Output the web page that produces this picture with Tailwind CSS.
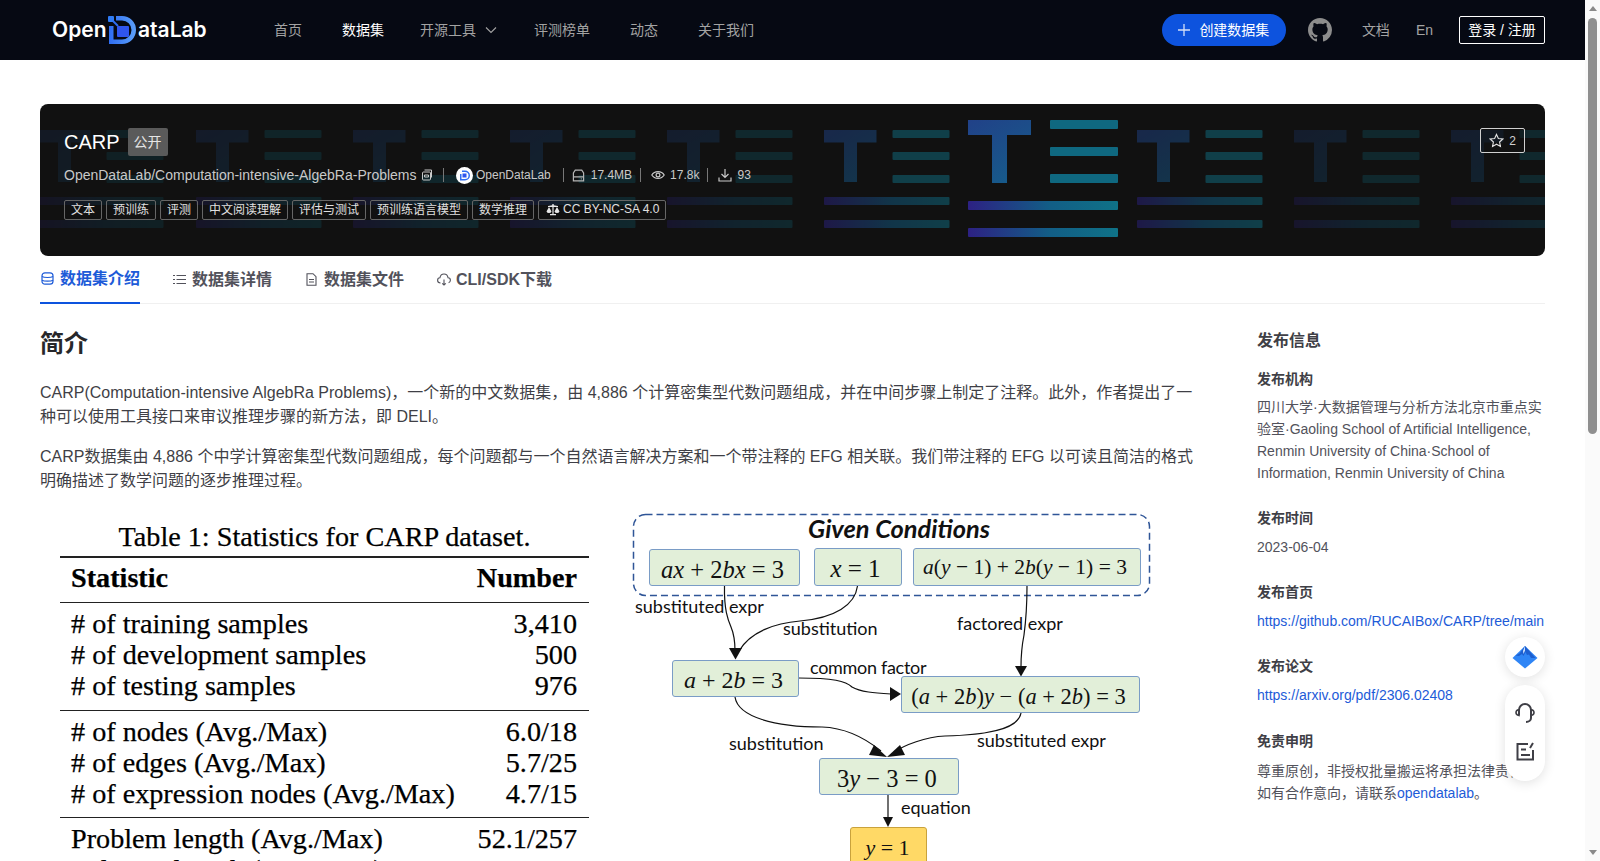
<!doctype html>
<html lang="zh">
<head>
<meta charset="utf-8">
<title>CARP</title>
<script src="https://cdn.jsdelivr.net/npm/@tailwindcss/browser@4"></script>
</head>
<body class="h-[861px] overflow-hidden bg-white font-['Liberation_Sans','Noto_Sans_CJK_SC',sans-serif] text-[#27272a]">
<div class="flex h-[861px]">
<div class="relative w-[1585px] h-[861px] overflow-hidden">

<header class="flex items-center h-[60px] bg-[#060913] text-sm text-[#a3a3a3] pl-[52px] pr-[40px]">
  <div class="flex items-center w-[222px] text-white font-semibold text-[21px] font-['Inter',sans-serif]">
    <span class="w-[56px]">Open</span>
    <svg class="w-[28px] h-[28px] mr-[2px]" viewBox="0 0 28 28">
      <defs><linearGradient id="lgo" x1="0" y1="0" x2="1" y2="0"><stop offset="0" stop-color="#2f6df2"/><stop offset="1" stop-color="#5b9ffa"/></linearGradient></defs>
      <rect x="0" y="0" width="6" height="6" rx="1" fill="#2f7bf5"/>
      <path d="M8 0h6a14 14 0 0 1 0 28H1V10h4.500v13.500H14a9.500 9.500 0 0 0 0-19H8z" fill="url(#lgo)"/>
      <path d="M5 5l5 5" stroke="#2f6df2" stroke-width="2"/>
      <rect x="9" y="10" width="12" height="11" rx="1" fill="#2f55ee"/>
    </svg>
    <span>ataLab</span>
  </div>
  <nav class="flex items-center">
    <a>首页</a>
    <a class="ml-[40px] text-white">数据集</a>
    <a class="ml-[36px] flex items-center">开源工具<svg class="w-[12px] h-[12px] ml-[9px] mr-[1px]" viewBox="0 0 12 12" fill="none" stroke="#a3a3a3" stroke-width="1.100"><path d="M1 3.500l5 5 5-5"/></svg></a>
    <a class="ml-[36px]">评测榜单</a>
    <a class="ml-[40px]">动态</a>
    <a class="ml-[40px]">关于我们</a>
  </nav>
  <div class="ml-auto flex items-center">
    <a class="flex items-center justify-center w-[124px] h-[32px] rounded-full bg-[#0d53de] text-white">
      <svg class="w-[12px] h-[12px] mr-[9px]" viewBox="0 0 12 12" stroke="#d5e0f8" stroke-width="1.300"><path d="M6 0v12M0 6h12"/></svg>创建数据集
    </a>
    <svg class="w-[24px] h-[24px] ml-[22px]" viewBox="0 0 16 16" fill="#8c8c8c"><path d="M8 0C3.580 0 0 3.580 0 8c0 3.540 2.290 6.530 5.470 7.590.4.070.55-.17.55-.38 0-.19-.01-.82-.01-1.490-2.010.37-2.530-.49-2.690-.94-.09-.23-.48-.94-.82-1.130-.28-.15-.68-.52-.01-.53.630-.01 1.080.58 1.230.82.720 1.210 1.870.87 2.330.66.070-.52.280-.87.510-1.070-1.780-.2-3.640-.89-3.640-3.950 0-.87.310-1.590.82-2.150-.08-.2-.36-1.020.08-2.120 0 0 .67-.21 2.200.82.640-.18 1.320-.27 2-.27s1.360.09 2 .27c1.530-1.040 2.200-.82 2.200-.82.440 1.100.16 1.920.08 2.120.51.560.82 1.270.82 2.150 0 3.070-1.870 3.750-3.650 3.950.290.250.540.730.540 1.480 0 1.070-.01 1.930-.01 2.200 0 .21.150.46.550.38A8.010 8.010 0 0 0 16 8c0-4.420-3.580-8-8-8z"/></svg>
    <a class="ml-[30px]">文档</a>
    <a class="ml-[26px]">En</a>
    <a class="ml-[26px] flex items-center justify-center w-[86px] h-[28px] border border-white rounded-[2px] text-white">登录 / 注册</a>
  </div>
</header>

<main class="px-[40px]">
  <section class="relative mt-[44px] h-[152px] rounded-lg bg-[#111111] overflow-hidden text-white">
    <svg class="absolute left-0 top-0 w-[1505px] h-[152px]" viewBox="40 104 1505 152">
      <defs>
        <linearGradient id="tb" gradientUnits="objectBoundingBox" x1="0" y1="0" x2="0.6" y2="1"><stop offset="0" stop-color="#214188"/><stop offset="1" stop-color="#175a8a"/></linearGradient>
        <linearGradient id="lg" gradientUnits="objectBoundingBox" x1="0" y1="0" x2="1" y2="0"><stop offset="0" stop-color="#2d2183"/><stop offset="0.55" stop-color="#125e86"/><stop offset="1" stop-color="#0f7287"/></linearGradient>
        <g id="cell">
          <path d="M0 130h52.500v12.500H33v39.500H20V142.500H0z" fill="url(#tb)"/>
          <rect x="68.500" y="130" width="57" height="8" rx="1" fill="#0f7287"/>
          <rect x="68.500" y="152" width="57" height="8" rx="1" fill="#0f7287"/>
          <rect x="68.500" y="175" width="57" height="8" rx="1" fill="#0f7287"/>
          <rect x="0" y="197" width="125.500" height="8" rx="1" fill="url(#lg)"/>
          <rect x="0" y="220" width="125.500" height="8" rx="1" fill="url(#lg)"/>
        </g>
      </defs>
      <use href="#cell" x="38" opacity=".16"/>
      <use href="#cell" x="196" opacity=".2"/>
      <use href="#cell" x="353" opacity=".22"/>
      <use href="#cell" x="510" opacity=".24"/>
      <use href="#cell" x="667" opacity=".24"/>
      <use href="#cell" x="824" opacity=".48"/>
      <use href="#cell" x="1137" opacity=".48"/>
      <use href="#cell" x="1294" opacity=".24"/>
      <use href="#cell" x="1451" opacity=".24"/>
      <g>
        <path d="M968 120h63v15h-24v48h-15v-48h-24z" fill="url(#tb)"/>
        <rect x="1050" y="120" width="68" height="9" rx="1" fill="#0f6880"/>
        <rect x="1050" y="147" width="68" height="9" rx="1" fill="#0f6880"/>
        <rect x="1050" y="174" width="68" height="9" rx="1" fill="#0f6880"/>
        <rect x="968" y="201" width="150" height="9" rx="1" fill="url(#lg)"/>
        <rect x="968" y="228" width="150" height="9" rx="1" fill="url(#lg)"/>
      </g>
    </svg>
    <div class="relative px-[24px] pt-[24px]">
      <div class="flex items-center h-[28px]">
        <span class="text-[20px] leading-[28px]">CARP</span>
        <span class="ml-[8px] w-[40px] h-[28px] flex items-center justify-center rounded-[2px] bg-[#5a5a5a] text-sm text-[#e5e5e5]">公开</span>
      </div>
      <div class="flex items-center h-[20px] mt-[9px] text-xs text-[#c9c9c9]">
        <span class="text-sm w-[352px] whitespace-nowrap">OpenDataLab/Computation-intensive-AlgebRa-Problems</span>
        <svg class="w-[12px] h-[12px] ml-[5px]" viewBox="0 0 12 12" fill="none" stroke="#c9c9c9"><rect x="1.500" y="3" width="8" height="8" rx="1"/><path d="M3.500 1h7v7.500M3.500 6h4v2h-4z"/></svg>
        <span class="w-px h-[14px] bg-[#777] ml-[10px]"></span>
        <svg class="ml-[12px] w-[17px] h-[17px]" viewBox="0 0 17 17"><circle cx="8.500" cy="8.500" r="8.500" fill="#fff"/><path d="M6 3.500h3a5 5 0 0 1 0 10H4V7h1.500v5H9a3.500 3.500 0 0 0 0-7H6z" fill="#2f6df2"/><rect x="6.500" y="6.500" width="4" height="4" fill="#2f55ee"/></svg>
        <span class="ml-[3px]">OpenDataLab</span>
        <span class="w-px h-[14px] bg-[#777] ml-[12px]"></span>
        <svg class="w-[13px] h-[13px] ml-[8px]" viewBox="0 0 14 14" fill="none" stroke="#b5b5b5" stroke-width="1.300"><path d="M3.500 1.200h7l2 3V12.800H1.500V4.200zM1.500 8.500h11M9.500 10.600h.9"/></svg>
        <span class="ml-[6px]">17.4MB</span>
        <span class="w-px h-[14px] bg-[#777] ml-[8px]"></span>
        <svg class="w-[14px] h-[14px] ml-[10px]" viewBox="0 0 14 14" fill="none" stroke="#c9c9c9" stroke-width="1.200"><path d="M.8 7C3.500 2.500 10.500 2.500 13.200 7 10.500 11.500 3.500 11.500.8 7z"/><circle cx="7" cy="7" r="1.900"/></svg>
        <span class="ml-[5px]">17.8k</span>
        <span class="w-px h-[14px] bg-[#777] ml-[8px]"></span>
        <svg class="w-[14px] h-[14px] ml-[10px]" viewBox="0 0 14 14" fill="none" stroke="#c9c9c9" stroke-width="1.200"><path d="M7 1v8.500M3.500 6L7 9.500 10.500 6M1 9.500V13h12V9.500"/></svg>
        <span class="ml-[5px]">93</span>
      </div>
      <div class="flex gap-[4px] mt-[15px] text-xs text-[#e0e0e0]">
        <span class="h-[20px] px-[6px] flex items-center border border-[#666] rounded-[2px]">文本</span>
        <span class="h-[20px] px-[6px] flex items-center border border-[#666] rounded-[2px]">预训练</span>
        <span class="h-[20px] px-[6px] flex items-center border border-[#666] rounded-[2px]">评测</span>
        <span class="h-[20px] px-[6px] flex items-center border border-[#666] rounded-[2px]">中文阅读理解</span>
        <span class="h-[20px] px-[6px] flex items-center border border-[#666] rounded-[2px]">评估与测试</span>
        <span class="h-[20px] px-[6px] flex items-center border border-[#666] rounded-[2px]">预训练语言模型</span>
        <span class="h-[20px] px-[6px] flex items-center border border-[#666] rounded-[2px]">数学推理</span>
        <span class="h-[20px] w-[128px] pl-[7px] flex items-center border border-[#666] rounded-[2px]">
          <svg class="w-[14px] h-[13px] mr-[3px] -mt-[2px]" viewBox="0 0 14 13" fill="#e8e8e8"><path d="M6.300 1h1.400v1.200L12 3v1H2V3l4.300-.8zM6.400 4h1.200v7H10v1.200H4V11h2.400zM3 4l2.500 4.500a2.600 2.200 0 0 1-5 0zm8 0l2.500 4.500a2.600 2.200 0 0 1-5 0z"/></svg><span class="-mt-[2px]">CC BY-NC-SA 4.0</span>
        </span>
      </div>
    </div>
    <button class="absolute right-[20px] top-[24px] w-[45px] h-[25px] flex items-center justify-center border border-[#d0d0d0] rounded-[2px] text-xs text-[#d0d0d0] bg-[#111]/40">
      <svg class="w-[15px] h-[15px] mr-[5px]" viewBox="0 0 16 16" fill="none" stroke="#e0e0e0" stroke-width="1.200"><path d="M8 1.500l2 4.300 4.700.6-3.400 3.200.9 4.700L8 12l-4.200 2.300.9-4.700L1.300 6.400 6 5.800z"/></svg>2
    </button>
  </section>

  <nav class="flex h-[48px] border-b border-[#f0f0f0] text-base font-semibold text-[#52525b]">
    <a class="flex items-center h-[48px] w-[100px] border-b-2 border-[#0d53de] text-[#1d5bd8]">
      <svg class="w-[13px] h-[13px] ml-[1px] mr-[6px] -mt-[2px]" viewBox="0 0 13 13" fill="none" stroke="#1d5bd8" stroke-width="1.200"><rect x="1" y=".8" width="11" height="11.400" rx="3"/><path d="M1 4.500c2 1.300 9 1.300 11 0M1 8.200c2 1.300 9 1.300 11 0"/></svg>数据集介绍
    </a>
    <a class="flex items-center h-[48px] ml-[33px]">
      <svg class="w-[13px] h-[13px] mr-[6px] -mt-[2px]" viewBox="0 0 13 13" stroke="#52525b" stroke-width="1.100"><path d="M3.500 2.500H13M3.500 6.500H13M3.500 10.500H13M0 2.500h2M0 6.500h2M0 10.500h2"/></svg>数据集详情
    </a>
    <a class="flex items-center h-[48px] ml-[33px]">
      <svg class="w-[13px] h-[13px] mr-[6px] -mt-[2px]" viewBox="0 0 13 13" fill="none" stroke="#52525b" stroke-width="1.100"><path d="M2 .7h6l3 3v8.600H2zM4 6.500h5M4 9h5"/></svg>数据集文件
    </a>
    <a class="flex items-center h-[48px] ml-[33px]">
      <svg class="w-[14px] h-[13px] mr-[5px] -mt-[2px]" viewBox="0 0 14 13" fill="none" stroke="#52525b" stroke-width="1.100"><path d="M3.500 10C1.500 10 .6 8.600.6 7.300c0-1.300 1-2.400 2.300-2.500C3.300 2.600 5 1 7 1s3.700 1.600 4.100 3.800c1.300.1 2.300 1.200 2.300 2.500 0 1.100-.7 2.100-1.800 2.500M7 6.500v5.500M5.200 10.300L7 12l1.800-1.700"/></svg>CLI/SDK下载
    </a>
  </nav>

  <div class="flex">
    <article class="w-[1160px]">
      <h2 class="text-2xl leading-[32px] font-semibold mt-[24px] text-[#27272a]">简介</h2>
      <p class="mt-[21px] text-base leading-[24px] text-[#3f3f46]">CARP(Computation-intensive AlgebRa Problems)，一个新的中文数据集，由 4,886 个计算密集型代数问题组成，并在中间步骤上制定了注释。此外，作者提出了一种可以使用工具接口来审议推理步骤的新方法，即 DELI。</p>
      <p class="mt-[16px] text-base leading-[24px] text-[#3f3f46]">CARP数据集由 4,886 个中学计算密集型代数问题组成，每个问题都与一个自然语言解决方案和一个带注释的 EFG 相关联。我们带注释的 EFG 以可读且简洁的格式明确描述了数学问题的逐步推理过程。</p>
      <div class="flex mt-[10px]">
        <div class="ml-[20px] w-[529px] pt-[18px] font-['Liberation_Serif',serif] text-[28.200px] leading-[31px] text-black [-webkit-text-stroke:0.25px_#000]">
          <div class="text-center h-[31px] whitespace-nowrap">Table 1: Statistics for CARP dataset.</div>
          <div class="mt-[4px] border-t-2 border-[#222] flex justify-between pl-[11px] pr-[12px] h-[47px] pb-[5px] items-center font-bold border-b border-b-[#222]"><span>Statistic</span><span>Number</span></div>
          <div class="border-b border-[#222] pl-[11px] pr-[12px] py-[5px] h-[108px]">
            <div class="flex justify-between"><span># of training samples</span><span>3,410</span></div>
            <div class="flex justify-between"><span># of development samples</span><span>500</span></div>
            <div class="flex justify-between"><span># of testing samples</span><span>976</span></div>
          </div>
          <div class="border-b border-[#222] pl-[11px] pr-[12px] py-[5px] h-[107px]">
            <div class="flex justify-between"><span># of nodes (Avg./Max)</span><span>6.0/18</span></div>
            <div class="flex justify-between"><span># of edges (Avg./Max)</span><span>5.7/25</span></div>
            <div class="flex justify-between"><span># of expression nodes (Avg./Max)</span><span>4.7/15</span></div>
          </div>
          <div class="pl-[11px] pr-[12px] py-[5px]">
            <div class="flex justify-between"><span>Problem length (Avg./Max)</span><span>52.1/257</span></div>
            <div class="flex justify-between"><span>Solution length (Avg./Max)</span><span>71.9/378</span></div>
          </div>
        </div>
      </div>
    </article>
    <aside class="ml-[57px] w-[288px] text-sm leading-[22px] text-[#52525b]">
      <h3 class="mt-[25px] text-base leading-[24px] font-semibold text-[#3f3f46]">发布信息</h3>
      <h4 class="mt-[15px] leading-[22px] font-semibold text-[#3f3f46]">发布机构</h4>
      <p class="mt-[6px]">四川大学·大数据管理与分析方法北京市重点实验室·Gaoling School of Artificial Intelligence, Renmin University of China·School of Information, Renmin University of China</p>
      <h4 class="mt-[23px] font-semibold text-[#3f3f46]">发布时间</h4>
      <p class="mt-[7px]">2023-06-04</p>
      <h4 class="mt-[23px] font-semibold text-[#3f3f46]">发布首页</h4>
      <p class="mt-[7px] text-[#1d5bd8] whitespace-nowrap">https://github.com/RUCAIBox/CARP/tree/main</p>
      <h4 class="mt-[23px] font-semibold text-[#3f3f46]">发布论文</h4>
      <p class="mt-[7px] text-[#1d5bd8]">https://arxiv.org/pdf/2306.02408</p>
      <h4 class="mt-[24px] font-semibold text-[#3f3f46]">免责申明</h4>
      <p class="mt-[8px]">尊重原创，非授权批量搬运将承担法律责任，<br>如有合作意向，请联系<span class="text-[#1d5bd8]">opendatalab</span>。</p>
    </aside>
  </div>
</main>

<!-- figure: free-canvas diagram -->
<div class="absolute left-[620px] top-[500px] w-[540px] h-[361px] overflow-hidden font-['Lato',sans-serif] text-[#111] text-[18px]">
  <svg class="absolute left-0 top-0 w-[540px] h-[361px]" viewBox="620 500 540 361" fill="none">
    <rect x="633.500" y="514.500" width="516" height="81" rx="12" stroke="#2f5597" stroke-width="1.500" stroke-dasharray="7 4"/>
    <g stroke="#111" stroke-width="1.200">
      <path d="M724.500 586C724 610 728 620 731 627C734 634 735 642 735 651"/>
      <path d="M857.500 586C855 605 835 618 800 621C775 623 750 632 739 651"/>
      <path d="M1027 586C1027 610 1026 620 1024 635C1022 645 1021 655 1021 667"/>
      <path d="M798.500 678C833 678 846 681 852 687C860 692 875 693 891 694"/>
      <path d="M735 697C738 717 775 727 822 727C850 728 870 742 881 751"/>
      <path d="M1021 713C1018 730 985 735 945 736C925 737 905 745 894 752"/>
      <path d="M888 795V818"/>
    </g>
    <g fill="#111">
      <path d="M729 648h13l-6.500 11.500z"/>
      <path d="M1015 666h12l-6 10.500z"/>
      <path d="M890 687l11 7-11 7z"/>
      <path d="M874 745l13 12-18-2z"/>
      <path d="M900 745l-13 12 18-2z"/>
      <path d="M883 817h10l-5 10z"/>
    </g>
  </svg>
  <div class="absolute left-[168px] top-[14px] w-[222px] text-center text-[25.400px] leading-[28px] font-bold italic whitespace-nowrap">Given Conditions</div>
  <div class="absolute left-[29px] top-[49px] w-[151px] h-[37px] pt-[5px] pr-[4px] flex items-center justify-center bg-[#e2efd9] border border-[#7a9cc6] rounded-[3px] font-['Liberation_Serif',serif] text-[24.500px] whitespace-nowrap"><span><i>ax</i> + 2<i>bx</i> = 3</span></div>
  <div class="absolute left-[194px] top-[48px] w-[88px] h-[38px] pt-[3px] pr-[5px] flex items-center justify-center bg-[#e2efd9] border border-[#7a9cc6] rounded-[3px] font-['Liberation_Serif',serif] text-[25px] whitespace-nowrap"><span><i>x</i> = 1</span></div>
  <div class="absolute left-[293px] top-[48px] w-[228px] h-[38px] pr-[4px] flex items-center justify-center bg-[#e2efd9] border border-[#7a9cc6] rounded-[3px] font-['Liberation_Serif',serif] text-[21.500px] whitespace-nowrap"><span><i>a</i>(<i>y</i> − 1) + 2<i>b</i>(<i>y</i> − 1) = 3</span></div>
  <div class="absolute left-[52px] top-[160px] w-[127px] h-[37px] pt-[2px] pr-[4px] flex items-center justify-center bg-[#e2efd9] border border-[#7a9cc6] rounded-[3px] font-['Liberation_Serif',serif] text-[24px] whitespace-nowrap"><span><i>a</i> + 2<i>b</i> = 3</span></div>
  <div class="absolute left-[281px] top-[176px] w-[239px] h-[37px] pt-[4px] pr-[4px] flex items-center justify-center bg-[#e2efd9] border border-[#7a9cc6] rounded-[3px] font-['Liberation_Serif',serif] text-[22.500px] whitespace-nowrap"><span>(<i>a</i> + 2<i>b</i>)<i>y</i> − (<i>a</i> + 2<i>b</i>) = 3</span></div>
  <div class="absolute left-[199px] top-[258px] w-[140px] h-[37px] pt-[5px] pr-[4px] flex items-center justify-center bg-[#e2efd9] border border-[#7a9cc6] rounded-[3px] font-['Liberation_Serif',serif] text-[24.500px] whitespace-nowrap"><span>3<i>y</i> − 3 = 0</span></div>
  <div class="absolute left-[230px] top-[327px] w-[77px] h-[40px] pr-[2px] flex items-center justify-center bg-[#ffd966] border border-[#c9a23c] rounded-[3px] font-['Liberation_Serif',serif] text-[22px] whitespace-nowrap"><span><i>y</i> = 1</span></div>
  <div class="absolute left-[15px] top-[95px] leading-[22px] whitespace-nowrap">substituted expr</div>
  <div class="absolute left-[163px] top-[117px] leading-[22px] whitespace-nowrap">substitution</div>
  <div class="absolute left-[337px] top-[112px] leading-[22px] whitespace-nowrap">factored expr</div>
  <div class="absolute left-[190px] top-[156px] leading-[22px] whitespace-nowrap tracking-[-0.3px]">common factor</div>
  <div class="absolute left-[109px] top-[232px] leading-[22px] whitespace-nowrap">substitution</div>
  <div class="absolute left-[357px] top-[229px] leading-[22px] whitespace-nowrap">substituted expr</div>
  <div class="absolute left-[281px] top-[296px] leading-[22px] whitespace-nowrap">equation</div>
</div>

<!-- floating tools -->
<div class="absolute left-[1505px] top-[637px] w-[40px] h-[40px] rounded-full bg-white shadow-[0_2px_12px_rgba(0,0,0,0.12)] flex items-center justify-center">
  <svg class="w-[26px] h-[24px]" viewBox="0 0 26 24"><path d="M13 1l12.500 12L13 23.500.5 13z" fill="#2f85f5"/><path d="M13 1L7.500 8.500 3.500 10.500 7 11l3-2 1.500 2 2-4 1.500 3 2-.5 2 3.500 4.500 0z" fill="#1d5fd0"/><path d="M13 1l-2 5 .5 3 1.500-3.500z" fill="#cfe3ff"/></svg>
</div>
<div class="absolute left-[1505px] top-[685px] w-[40px] h-[96px] rounded-full bg-white shadow-[0_2px_12px_rgba(0,0,0,0.12)] flex flex-col items-center">
  <svg class="w-[22px] h-[22px] mt-[17px]" viewBox="0 0 22 22" fill="none" stroke="#3f3f46" stroke-width="2"><path d="M5 13V8a6 6 0 0 1 12 0v8c0 2-2 4-5 4"/><path d="M5 7.500C2.500 8 2 9.500 2 10.500s.5 2.500 3 3zM17 7.500c2.500.5 3 2 3 3s-.5 2.500-3 3z" stroke-width="1.600"/></svg>
  <svg class="w-[19px] h-[19px] mt-[18px]" viewBox="0 0 19 19" fill="none" stroke="#3f3f46" stroke-width="2"><path d="M12 2H1.500v15.500H17V8"/><path d="M5 7.500h5M5 13h9M14 6l3-5" /></svg>
</div>
</div>

<!-- scrollbar -->
<div class="relative w-[15px] h-[861px] bg-[#fafafa] flex flex-col items-center justify-between">
  <div class="mt-[6px] w-0 h-0 border-x-[4px] border-x-transparent border-b-[5px] border-b-[#8a8a8a]"></div>
  <div class="absolute left-[3px] top-[18px] w-[9px] h-[416px] rounded-[5px] bg-[#8f8f8f]"></div>
  <div class="mb-[6px] w-0 h-0 border-x-[4px] border-x-transparent border-t-[5px] border-t-[#8a8a8a]"></div>
</div>
</div>
</body>
</html>
